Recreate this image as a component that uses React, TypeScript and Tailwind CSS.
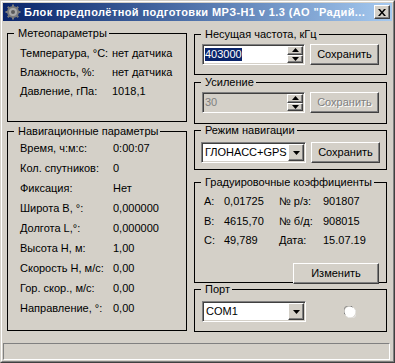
import React from 'react';

const raised = 'border border-t-white border-l-white border-r-[#404040] border-b-[#404040] shadow-[inset_-1px_-1px_0_#808080]';
const sunken = 'border border-t-[#808080] border-l-[#808080] border-r-white border-b-white shadow-[inset_1px_1px_0_#404040,inset_-1px_-1px_0_#d4d0c8]';

const meteo = [
    ['Температура, °С:', 'нет датчика'],
    ['Влажность, %:', 'нет датчика'],
    ['Давление, гПа:', '1018,1'],
];

const nav = [
    ['Время, ч:м:с:', '0:00:07'],
    ['Кол. спутников:', '0'],
    ['Фиксация:', 'Нет'],
    ['Широта B, °:', '0,000000'],
    ['Долгота L,°:', '0,000000'],
    ['Высота H, м:', '1,00'],
    ['Скорость H, м/с:', '0,00'],
    ['Гор. скор., м/с:', '0,00'],
    ['Направление, °:', '0,00'],
];

const coeffs = [
    ['A:', '0,01725', '№ р/з:', '901807'],
    ['B:', '4615,70', '№ б/д:', '908015'],
    ['C:', '49,789', 'Дата:', '15.07.19'],
];

const GroupBox = ({ title, className, children }: { title: string; className: string; children?: React.ReactNode }) => (
    <fieldset className={`border border-black px-0 ${className}`}>
        <legend className="ml-[6px] pl-[4px] pr-[2px] leading-[13px]">{title}</legend>
        {children}
    </fieldset>
);

const Arrow = ({ up }: { up?: boolean }) => (
    <svg width="7" height="4" viewBox="0 0 7 4">
        <path d={up ? 'M3.5 0L7 4H0z' : 'M0 0h7L3.5 4z'} fill="#000" />
    </svg>
);

const Button = ({ label, disabled, className }: { label: string; disabled?: boolean; className: string }) => (
    <div className={`${raised} flex items-center justify-center ${className}`}>
        <span className={disabled ? 'text-[#808080] [text-shadow:1px_1px_0_#fff]' : ''}>{label}</span>
    </div>
);

const SpinEdit = ({ value, disabled }: { value: string; disabled?: boolean }) => (
    <div className={`${sunken} flex h-[21px] w-[103px] p-[1px] ${disabled ? 'bg-[#d4d0c8]' : 'bg-white'}`}>
        <div className="flex flex-1 items-center pl-[1px]">
            {disabled ? (
                <span className="text-[#808080]">{value}</span>
            ) : (
                <span className="bg-[#0a246a] leading-[13px] text-white">{value}</span>
            )}
        </div>
        <div className="flex w-[16px] flex-col">
            <div className={`${raised} flex flex-1 items-center justify-center bg-[#d4d0c8]`}>
                <Arrow up />
            </div>
            <div className={`${raised} flex flex-1 items-center justify-center bg-[#d4d0c8]`}>
                <Arrow />
            </div>
        </div>
    </div>
);

const Combo = ({ value, className }: { value: string; className: string }) => (
    <div className={`${sunken} flex h-[21px] bg-white p-[1px] ${className}`}>
        <div className="flex flex-1 items-center pl-[2px]">{value}</div>
        <div className={`${raised} flex w-[16px] items-center justify-center bg-[#d4d0c8]`}>
            <Arrow />
        </div>
    </div>
);

const App = () => {
    return (
        <div className="h-[363px] w-[395px] border border-t-[#d4d0c8] border-l-[#d4d0c8] border-r-[#404040] border-b-[#404040] bg-[#d4d0c8] font-['Liberation_Sans',Arial,sans-serif] text-[11px] leading-[13px] text-black">
            <div className="flex h-full flex-col border border-t-white border-l-white border-r-[#808080] border-b-[#808080] p-[1px]">
                {/* title bar */}
                <div className="flex h-[18px] items-center bg-gradient-to-r from-[#0a246a] to-[#a6caf0] pl-[2px] pr-[2px]">
                    <svg width="16" height="16" viewBox="0 0 16 16">
                        <g fill="#7a7a7a">
                            <circle cx="8" cy="8" r="6" />
                            <rect x="7" y="0.5" width="2" height="15" />
                            <rect x="0.5" y="7" width="15" height="2" />
                            <rect x="7" y="0.5" width="2" height="15" transform="rotate(45 8 8)" />
                            <rect x="7" y="0.5" width="2" height="15" transform="rotate(-45 8 8)" />
                        </g>
                        <circle cx="8" cy="8" r="4" fill="#a8a8a8" />
                        <circle cx="8" cy="8" r="2" fill="#5a5a5a" />
                    </svg>
                    <span className="ml-[3px] flex-1 whitespace-nowrap text-[11px] font-bold tracking-[0.4px] text-white">
                        Блок предполётной подготовки МРЗ-Н1 v 1.3 (АО "Радий...
                    </span>
                    <div className={`${raised} flex h-[14px] w-[16px] items-center justify-center bg-[#d4d0c8]`}>
                        <svg width="8" height="7" viewBox="0 0 8 7">
                            <path d="M0 0h2l2 2.5L6 0h2L5 3.5 8 7H6L4 4.5 2 7H0l3-3.5z" fill="#000" />
                        </svg>
                    </div>
                </div>

                {/* body */}
                <div className="flex flex-1 gap-[7px] pl-[4px]">
                    <div className="flex w-[180px] flex-col">
                        <GroupBox title="Метеопараметры" className="mt-[6px] h-[95px]">
                            <div className="pl-[12px] pt-[4px]">
                                {meteo.map(([k, v]) => (
                                    <div key={k} className="flex h-[19px] items-center">
                                        <span className="w-[92px]">{k}</span>
                                        <span>{v}</span>
                                    </div>
                                ))}
                            </div>
                        </GroupBox>
                        <GroupBox title="Навигационные параметры" className="mt-[3px] h-[206px]">
                            <div className="pl-[12px] pt-[1px]">
                                {nav.map(([k, v]) => (
                                    <div key={k} className="flex h-[19.9px] items-center">
                                        <span className="w-[93px]">{k}</span>
                                        <span>{v}</span>
                                    </div>
                                ))}
                            </div>
                        </GroupBox>
                    </div>

                    <div className="flex w-[193px] flex-col">
                        <GroupBox title="Несущая частота, кГц" className="mt-[7px] h-[47px]">
                            <div className="flex gap-[5px] pl-[7px] pt-[3px]">
                                <SpinEdit value="403000" />
                                <Button label="Сохранить" className="h-[21px] w-[69px]" />
                            </div>
                        </GroupBox>
                        <GroupBox title="Усиление" className="mt-[1px] h-[48px]">
                            <div className="flex gap-[5px] pl-[7px] pt-[3px]">
                                <SpinEdit value="30" disabled />
                                <Button label="Сохранить" disabled className="h-[21px] w-[69px]" />
                            </div>
                        </GroupBox>
                        <GroupBox title="Режим навигации" className="h-[46px]">
                            <div className="flex gap-[5px] pl-[6px] pt-[5px]">
                                <Combo value="ГЛОНАСС+GPS" className="w-[105px]" />
                                <Button label="Сохранить" className="h-[21px] w-[69px]" />
                            </div>
                        </GroupBox>
                        <GroupBox title="Градуировочные коэффициенты" className="mt-[6px] h-[107px]">
                            <div className="pl-[9px] pt-[3px]">
                                {coeffs.map(([a, b, c, d]) => (
                                    <div key={a} className="flex h-[19.5px] items-center">
                                        <span className="w-[20px]">{a}</span>
                                        <span className="w-[55px]">{b}</span>
                                        <span className="w-[44px]">{c}</span>
                                        <span>{d}</span>
                                    </div>
                                ))}
                            </div>
                            <div className="flex justify-end pr-[7px] pt-[12px]">
                                <Button label="Изменить" className="h-[21px] w-[86px]" />
                            </div>
                        </GroupBox>
                        <GroupBox title="Порт" className="h-[49px]">
                            <div className="flex items-center pl-[7px] pt-[5px]">
                                <Combo value="COM1" className="w-[104px]" />
                                <svg width="12" height="12" viewBox="0 0 12 12" className="ml-[38px]">
                                    <circle cx="6" cy="6" r="5.5" fill="#fff" />
                                    <path d="M1.2 8.5A5 5 0 0 1 8.5 1.2" fill="none" stroke="#808080" />
                                    <path d="M10.8 3.5A5 5 0 0 1 3.5 10.8" fill="none" stroke="#e8e8e8" />
                                </svg>
                            </div>
                        </GroupBox>
                    </div>
                </div>

                {/* status bar */}
                <div className="mr-[2px] h-[17px] border border-t-[#808080] border-l-[#808080] border-r-white border-b-white" />
            </div>
        </div>
    );
};

export default App;
